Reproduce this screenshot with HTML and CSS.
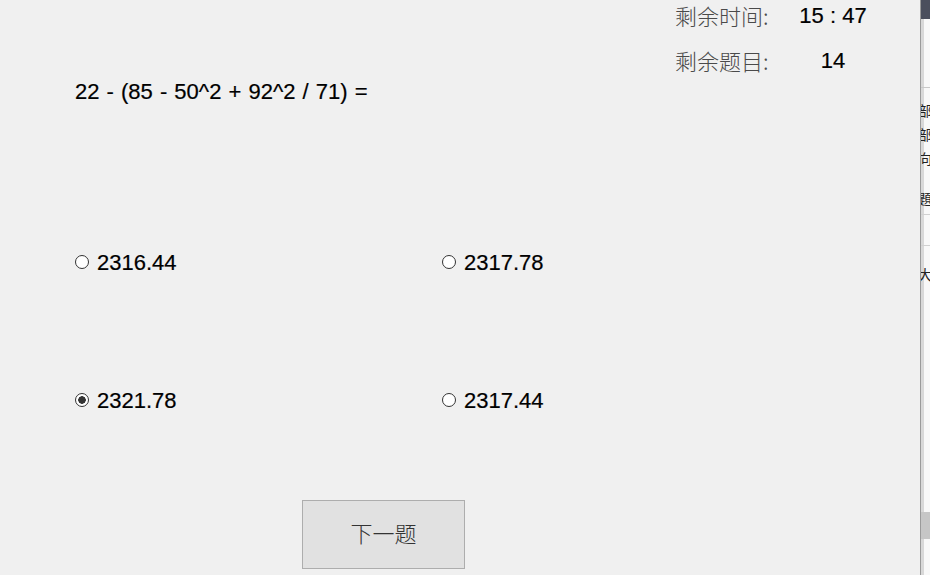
FILE: index.html
```html
<!DOCTYPE html>
<html lang="zh-CN">
<head>
    <meta charset="UTF-8">
    <title>答题</title>
    <link rel="stylesheet" href="styles.css">
</head>
<body>
    <div class="window">
        <div class="quiz">
            <div class="stats">
                <span class="label">剩余时间:</span>
                <span class="value">15 : 47</span>
                <span class="label">剩余题目:</span>
                <span class="value">14</span>
            </div>

            <div class="question">22 - (85 - 50^2 + 92^2 / 71) =</div>

            <div class="options">
                <label class="option"><input type="radio" name="answer"> 2316.44</label>
                <label class="option"><input type="radio" name="answer"> 2317.78</label>
                <label class="option"><input type="radio" name="answer" checked> 2321.78</label>
                <label class="option"><input type="radio" name="answer"> 2317.44</label>
            </div>

            <div class="actions">
                <button type="button" class="next">下一题</button>
            </div>
        </div>

        <div class="behind">
            <div class="behind-top"></div>
            <div class="behind-list">
                <div class="row first">部</div>
                <div class="row">部</div>
                <div class="row">向</div>
                <div class="row gap">題</div>
                <div class="row sep">大</div>
            </div>
            <div class="behind-thumb"></div>
        </div>
    </div>
</body>
</html>
```

FILE: styles.css
```css
body {
    margin: 0;
    padding: 0;
    background-color: #f0f0f0;
    font-family: "Liberation Sans", Arial, sans-serif;
}
.window {
    display: flex;
    width: 930px;
    height: 575px;
    overflow: hidden;
}
.quiz {
    width: 920px;
    flex-shrink: 0;
    padding-left: 75px;
    box-sizing: border-box;
}
.stats {
    display: grid;
    grid-template-columns: 118px 80px;
    row-gap: 20px;
    margin-left: 600px;
    padding-top: 3px;
    font-size: 22px;
    line-height: 25px;
}
.stats .label {
    font-family: "Noto Sans CJK SC", sans-serif;
    font-weight: 300;
    color: #4a4a4a;
}
.stats .value {
    text-align: center;
    color: #000;
    -webkit-text-stroke: 0.2px #000;
}
.question {
    margin-top: 6px;
    font-size: 22px;
    line-height: 25px;
    word-spacing: 1px;
    color: #000;
    -webkit-text-stroke: 0.2px #000;
}
.options {
    display: grid;
    grid-template-columns: 367px 367px;
    row-gap: 113px;
    margin-top: 146px;
}
.option {
    display: flex;
    align-items: center;
    gap: 8px;
    font-size: 22px;
    line-height: 25px;
    color: #000;
    -webkit-text-stroke: 0.2px #000;
}
.option input {
    appearance: none;
    width: 14px;
    height: 14px;
    margin: 0;
    border: 1px solid #333;
    border-radius: 50%;
    background-color: #fff;
    box-sizing: border-box;
    position: relative;
    top: -1px;
}
.option input:checked {
    background: radial-gradient(circle, #333 0 3.5px, #fff 4px);
}
.actions {
    margin-top: 87px;
    padding-left: 227px;
}
.next {
    width: 163px;
    height: 69px;
    padding: 0 0 5px;
    background-color: #e1e1e1;
    border: 1px solid #adadad;
    font-family: "Noto Sans CJK SC", sans-serif;
    font-weight: 300;
    font-size: 22px;
    color: #333;
    cursor: pointer;
}
.behind {
    flex: 1;
    border-left: 1px solid #9a9a9a;
    box-shadow: inset 3px 0 0 #d8d8d8;
    background-color: #f8f8f8;
    overflow: hidden;
    font-family: "Noto Sans CJK SC", sans-serif;
    font-size: 14px;
    color: #222;
}
.behind-top {
    height: 19px;
    background-color: #4b4f5d;
}
.behind-list {
    margin-top: 68px;
    border-top: 1px solid #c8c8c8;
}
.row {
    height: 24px;
    line-height: 24px;
    margin-left: -3px;
}
.row.first {
    margin-top: 10px;
}
.row.gap {
    margin-top: 16px;
    border-bottom: 1px solid #d0d0d0;
    padding-bottom: 4px;
}
.row.sep {
    padding-top: 16px;
    border-top: 1px solid #d0d0d0;
    margin-top: 30px;
}
.behind-thumb {
    margin-top: 226px;
    height: 27px;
    background-color: #c6c6c6;
}
```
